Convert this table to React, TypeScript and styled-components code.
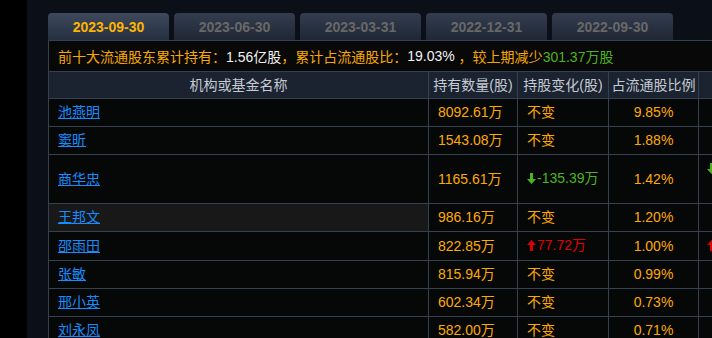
import React from "react";
import styled, { createGlobalStyle } from "styled-components";

const Global = createGlobalStyle`
  html, body { margin: 0; padding: 0; background: #000; overflow: hidden; }
  body { font-family: "Liberation Sans", "Noto Sans CJK SC", sans-serif; font-size: 14px; }
`;

const Page = styled.div`
  display: flex;
  width: 712px;
  height: 338px;
  overflow: hidden;
  background: #000;
`;

const Gutter = styled.div`
  width: 27px;
  flex: none;
  background: #000;
`;

const Panel = styled.div`
  flex: 1;
  min-width: 0;
  background: #0b0f18;
  padding: 13px 0 0 21px;
  overflow: hidden;
`;

const Tabs = styled.div`
  display: flex;
  gap: 5px;
  height: 27px;
`;

const Tab = styled.div<{ $active?: boolean }>`
  width: 121px;
  flex: none;
  border-radius: 4px 4px 0 0;
  display: flex;
  align-items: center;
  justify-content: center;
  font-weight: bold;
  font-size: 14px;
  color: ${(p) => (p.$active ? "#ffb300" : "#686868")};
  background: ${(p) =>
    p.$active
      ? "linear-gradient(#3e495c, #243040)"
      : "linear-gradient(#343d4e, #1f2735)"};
`;

const Board = styled.div`
  width: 771px;
`;

const Summary = styled.div`
  height: 30px;
  display: flex;
  align-items: center;
  padding: 0 9px;
  background: #080808;
  border: 1px solid #36414f;
  border-bottom: none;
  white-space: nowrap;
  color: #f8a900;
`;

const Hi = styled.span<{ $tone: "white" | "green" }>`
  color: ${(p) => (p.$tone === "white" ? "#f2f2f2" : "#4cb51c")};
`;

const Table = styled.table`
  width: 771px;
  table-layout: fixed;
  border-collapse: collapse;
  background: #060808;
`;

const Th = styled.th`
  height: 20px;
  padding: 3px 0;
  line-height: 20px;
  font-weight: normal;
  color: #c5cad3;
  background: #1b2330;
  border: 1px solid #36414f;
  text-align: center;
  white-space: nowrap;
`;

const Td = styled.td<{ $align?: "left" | "center"; $hl?: boolean }>`
  padding: 3px 9px;
  line-height: 21px;
  border: 1px solid #36414f;
  text-align: ${(p) => p.$align ?? "left"};
  vertical-align: middle;
  white-space: nowrap;
  color: #ffa800;
  background: ${(p) => (p.$hl ? "#181818" : "transparent")};
`;

const MarkCell = styled.td<{ $tall?: boolean }>`
  padding: 3px 8px;
  height: ${(p) => (p.$tall ? "42px" : "21px")};
  line-height: 21px;
  border: 1px solid #36414f;
  vertical-align: top;
`;

const NameLink = styled.a`
  color: #168dff;
  text-decoration: underline;
  cursor: pointer;
`;

const Change = styled.span<{ $dir: "up" | "down" | "none" }>`
  display: inline-flex;
  align-items: center;
  height: 21px;
  color: ${(p) =>
    p.$dir === "up" ? "#e00000" : p.$dir === "down" ? "#4cb51c" : "#ffa800"};
  svg {
    margin-right: 1px;
  }
`;

const Arrow: React.FC<{ dir: "up" | "down" }> = ({ dir }) => (
  <svg width="9" height="11" viewBox="0 0 9 11">
    <polygon
      fill={dir === "up" ? "#d80000" : "#4cb51c"}
      points={
        dir === "up"
          ? "4.5,0 9,5 6,5 6,11 3,11 3,5 0,5"
          : "4.5,11 9,6 6,6 6,0 3,0 3,6 0,6"
      }
    />
  </svg>
);

type Dir = "up" | "down" | "none";

type Row = {
  name: string;
  amount: string;
  change: string;
  dir: Dir;
  ratio: string;
  tall?: boolean;
  hl?: boolean;
};

const rows: Row[] = [
  { name: "池燕明", amount: "8092.61万", change: "不变", dir: "none", ratio: "9.85%" },
  { name: "窦昕", amount: "1543.08万", change: "不变", dir: "none", ratio: "1.88%" },
  { name: "商华忠", amount: "1165.61万", change: "-135.39万", dir: "down", ratio: "1.42%", tall: true },
  { name: "王邦文", amount: "986.16万", change: "不变", dir: "none", ratio: "1.20%", hl: true },
  { name: "邵雨田", amount: "822.85万", change: "77.72万", dir: "up", ratio: "1.00%" },
  { name: "张敏", amount: "815.94万", change: "不变", dir: "none", ratio: "0.99%" },
  { name: "邢小英", amount: "602.34万", change: "不变", dir: "none", ratio: "0.73%" },
  { name: "刘永凤", amount: "582.00万", change: "不变", dir: "none", ratio: "0.71%" },
];

const tabs = ["2023-09-30", "2023-06-30", "2023-03-31", "2022-12-31", "2022-09-30"];

export default function App() {
  return (
    <>
      <Global />
      <Page>
        <Gutter />
        <Panel>
          <Tabs>
            {tabs.map((t, i) => (
              <Tab key={t} $active={i === 0}>
                {t}
              </Tab>
            ))}
          </Tabs>
          <Board>
            <Summary>
              前十大流通股东累计持有：<Hi $tone="white">1.56亿股</Hi>，累计占流通股比：
              <Hi $tone="white">19.03%</Hi>&nbsp;，较上期减少<Hi $tone="green">301.37万股</Hi>
            </Summary>
            <Table>
              <colgroup>
                <col style={{ width: 380 }} />
                <col style={{ width: 89 }} />
                <col style={{ width: 91 }} />
                <col style={{ width: 90 }} />
                <col style={{ width: 121 }} />
              </colgroup>
              <thead>
                <tr>
                  <Th>机构或基金名称</Th>
                  <Th>持有数量(股)</Th>
                  <Th>持股变化(股)</Th>
                  <Th>占流通股比例</Th>
                  <Th />
                </tr>
              </thead>
              <tbody>
                {rows.map((r) => (
                  <tr key={r.name}>
                    <Td $hl={r.hl}>
                      <NameLink>{r.name}</NameLink>
                    </Td>
                    <Td>{r.amount}</Td>
                    <Td>
                      <Change $dir={r.dir}>
                        {r.dir !== "none" && <Arrow dir={r.dir} />}
                        {r.change}
                      </Change>
                    </Td>
                    <Td $align="center">{r.ratio}</Td>
                    <MarkCell $tall={r.tall}>
                      {r.dir !== "none" && (
                        <Change $dir={r.dir}>
                          <Arrow dir={r.dir} />
                        </Change>
                      )}
                    </MarkCell>
                  </tr>
                ))}
              </tbody>
            </Table>
          </Board>
        </Panel>
      </Page>
    </>
  );
}
